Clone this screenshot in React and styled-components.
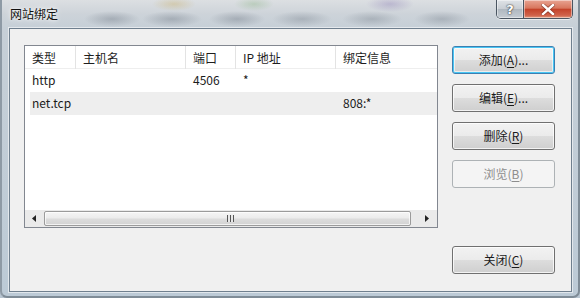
import React from "react";
import styled, { createGlobalStyle, css } from "styled-components";

const columns = [
  { key: "type", label: "类型" },
  { key: "host", label: "主机名" },
  { key: "port", label: "端口" },
  { key: "ip", label: "IP 地址" },
  { key: "info", label: "绑定信息" },
];

const bindings = [
  { type: "http", host: "", port: "4506", ip: "*", info: "" },
  { type: "net.tcp", host: "", port: "", ip: "", info: "808:*", selected: true },
];

const actions = [
  { label: "添加", hot: "A", dots: true, primary: true },
  { label: "编辑", hot: "E", dots: true },
  { label: "删除", hot: "R" },
  { label: "浏览", hot: "B", disabled: true },
];

export default function App() {
  return (
    <>
      <GlobalStyle />
      <Window>
        <TitleBar>
          <Title>网站绑定</Title>
          <CaptionButtons>
            <HelpButton>?</HelpButton>
            <CloseButton>
              <svg width="14" height="11" viewBox="0 0 14 11">
                <path
                  d="M2 1 L12 10 M12 1 L2 10"
                  stroke="#5a1a10"
                  strokeWidth="4"
                  strokeLinecap="square"
                  opacity="0.5"
                />
                <path
                  d="M2 1 L12 10 M12 1 L2 10"
                  stroke="#fff"
                  strokeWidth="2.4"
                  strokeLinecap="square"
                />
              </svg>
            </CloseButton>
          </CaptionButtons>
        </TitleBar>

        <Client>
          <ListView>
            <HeaderRow>
              {columns.map((c) => (
                <HeaderCell key={c.key}>{c.label}</HeaderCell>
              ))}
            </HeaderRow>
            {bindings.map((b, i) => (
              <Row key={i} $selected={b.selected}>
                {columns.map((c) => (
                  <Cell key={c.key}>{b[c.key]}</Cell>
                ))}
              </Row>
            ))}
            <Filler />
            <HScroll>
              <ArrowBtn>
                <svg width="4" height="7" viewBox="0 0 4 7">
                  <path d="M4 0 L0 3.5 L4 7 Z" fill="#222" />
                </svg>
              </ArrowBtn>
              <Thumb>
                <Grip />
              </Thumb>
              <ArrowBtn $right>
                <svg width="4" height="7" viewBox="0 0 4 7">
                  <path d="M0 0 L4 3.5 L0 7 Z" fill="#222" />
                </svg>
              </ArrowBtn>
            </HScroll>
          </ListView>

          <ButtonColumn>
            {actions.map((a) => (
              <DialogButton key={a.label} $primary={a.primary} disabled={a.disabled}>
                {a.label}(<u>{a.hot}</u>){a.dots ? "..." : ""}
              </DialogButton>
            ))}
            <Spacer />
            <DialogButton>
              关闭(<u>C</u>)
            </DialogButton>
          </ButtonColumn>
        </Client>
      </Window>
    </>
  );
}

// Styled Components

const GlobalStyle = createGlobalStyle`
  html, body {
    margin: 0;
    padding: 0;
    background: #b9c6d2;
  }
  * {
    box-sizing: border-box;
  }
`;

const Window = styled.div`
  width: 580px;
  height: 298px;
  display: flex;
  flex-direction: column;
  overflow: hidden;
  font-family: "Noto Sans CJK SC", "Noto Sans", sans-serif;
  font-size: 12px;
  color: #1b1b1b;
  background:
    radial-gradient(ellipse 22px 7px at 172px 4px, rgba(200, 170, 90, 0.35), transparent),
    radial-gradient(ellipse 20px 7px at 252px 4px, rgba(120, 170, 110, 0.3), transparent),
    radial-gradient(ellipse 24px 8px at 388px 4px, rgba(120, 100, 170, 0.3), transparent),
    radial-gradient(ellipse 28px 8px at 110px 19px, rgba(95, 105, 118, 0.35), transparent),
    radial-gradient(ellipse 30px 8px at 170px 19px, rgba(95, 105, 118, 0.35), transparent),
    radial-gradient(ellipse 28px 8px at 235px 19px, rgba(95, 105, 118, 0.35), transparent),
    radial-gradient(ellipse 30px 8px at 300px 19px, rgba(95, 105, 118, 0.3), transparent),
    radial-gradient(ellipse 30px 8px at 370px 19px, rgba(95, 105, 118, 0.3), transparent),
    radial-gradient(ellipse 28px 8px at 440px 19px, rgba(95, 105, 118, 0.3), transparent),
    linear-gradient(to bottom, #dcdfe2 0px, #cdd3d9 14px, #c6cfd7 28px, #bccad6 100%);
  border-left: 2px solid #8e9aa5;
  border-right: 2px solid #7f8c97;
  border-bottom: 2px solid #7f8c97;
  border-radius: 0 0 7px 7px;
`;

const TitleBar = styled.div`
  height: 28px;
  flex: none;
  display: flex;
  align-items: flex-start;
  justify-content: space-between;
`;

const Title = styled.div`
  margin: 6px 0 0 8px;
  font-size: 12px;
  line-height: 16px;
  color: #111;
  text-shadow: 0 0 6px rgba(255, 255, 255, 0.95), 0 0 3px rgba(255, 255, 255, 0.9);
`;

const CaptionButtons = styled.div`
  display: flex;
  margin-right: 5px;
  height: 19px;
  border: 1px solid #4a5561;
  border-top: none;
  border-radius: 0 0 5px 5px;
  overflow: hidden;
  box-shadow: 0 1px 0 rgba(255, 255, 255, 0.6);
`;

const captionBase = css`
  height: 100%;
  display: flex;
  align-items: center;
  justify-content: center;
  box-shadow: inset 0 0 0 1px rgba(255, 255, 255, 0.45);
`;

const HelpButton = styled.div`
  ${captionBase};
  width: 27px;
  border-right: 1px solid #4a5561;
  background: linear-gradient(to bottom, #dfe3e7 0%, #c9ced4 48%, #b0b8c0 52%, #c5ccd3 100%);
  font-family: "DejaVu Sans", sans-serif;
  font-weight: bold;
  font-size: 13px;
  color: #fff;
  text-shadow: 0 0 2px #333, 0 0 1px #222;
`;

const CloseButton = styled.div`
  ${captionBase};
  width: 48px;
  background: linear-gradient(to bottom, #e8a493 0%, #d8775e 45%, #c4432a 52%, #d0624a 85%, #e29a7e 100%);
`;

const Client = styled.div`
  flex: 1;
  margin: 0 6px 4px 7px;
  display: flex;
  gap: 14px;
  padding: 16px 16px 17px 14px;
  background: #f0f0f0;
  border: 1px solid #6f7f8e;
  box-shadow: 0 0 0 1px rgba(255, 255, 255, 0.55);
`;

const ListView = styled.div`
  width: 414px;
  height: 183px;
  display: flex;
  flex-direction: column;
  background: #fff;
  border: 1px solid #828790;
`;

const gridCols = css`
  display: grid;
  grid-template-columns: 51px 110px 50px 100px 1fr;
`;

const HeaderRow = styled.div`
  ${gridCols};
  height: 23px;
  border-bottom: 1px solid #eeeeee;
`;

const HeaderCell = styled.div`
  padding-left: 7px;
  line-height: 23px;
  color: #1e1e1e;
  border-right: 1px solid #e3e3e3;
  white-space: nowrap;

  &:last-child {
    border-right: none;
  }
`;

const Row = styled.div`
  ${gridCols};
  height: 23px;
  background: ${(p) =>
    p.$selected ? "linear-gradient(to right, #fff 5px, #eeeeee 5px)" : "#fff"};
`;

const Cell = styled.div`
  padding-left: 7px;
  line-height: 22px;
  white-space: nowrap;
  color: #1b1b1b;
`;

const Filler = styled.div`
  flex: 1;
`;

const HScroll = styled.div`
  height: 17px;
  flex: none;
  display: flex;
  background: #eaeaea;
  padding: 0 1px 1px 0;
`;

const ArrowBtn = styled.div`
  width: ${(p) => (p.$right ? "25px" : "18px")};
  display: flex;
  align-items: center;
  justify-content: center;
  padding-left: ${(p) => (p.$right ? "6px" : "0")};
`;

const Thumb = styled.div`
  flex: 1;
  margin: 1px 0 0 1px;
  display: flex;
  align-items: center;
  justify-content: center;
  border: 1px solid #9b9b9b;
  border-radius: 2px;
  background: linear-gradient(to bottom, #f5f5f5 0%, #ececec 45%, #dcdcdc 55%, #d3d3d3 100%);
  box-shadow: inset 0 0 0 1px rgba(255, 255, 255, 0.7);
`;

const Grip = styled.div`
  width: 7px;
  height: 7px;
  margin-left: 6px;
  background: repeating-linear-gradient(
    to right,
    #555 0px,
    #555 1px,
    #e8e8e8 1px,
    #e8e8e8 3px
  );
`;

const ButtonColumn = styled.div`
  width: 103px;
  display: flex;
  flex-direction: column;
  gap: 10px;
  margin-top: 1px;
`;

const Spacer = styled.div`
  flex: 1;
`;

const DialogButton = styled.button`
  height: 28px;
  width: 100%;
  padding: 0;
  font-family: "Noto Sans CJK SC", "Noto Sans", sans-serif;
  font-size: 12px;
  line-height: 16px;
  color: #1b1b1b;
  border: 1px solid #707070;
  border-radius: 3px;
  background: linear-gradient(to bottom, #f2f2f2 0%, #ebebeb 50%, #dddddd 50%, #cfcfcf 100%);
  box-shadow: inset 0 0 0 1px rgba(255, 255, 255, 0.75);

  u {
    text-underline-offset: 2px;
  }

  ${(p) =>
    p.$primary &&
    css`
      border-color: #3c7fb1;
      box-shadow: inset 0 0 0 1px #48c6f4, inset 0 0 0 2px rgba(255, 255, 255, 0.6);
    `}

  &:disabled {
    border-color: #adb2b5;
    background: #f4f4f4;
    color: #8d8d8d;
    box-shadow: none;
  }
`;
